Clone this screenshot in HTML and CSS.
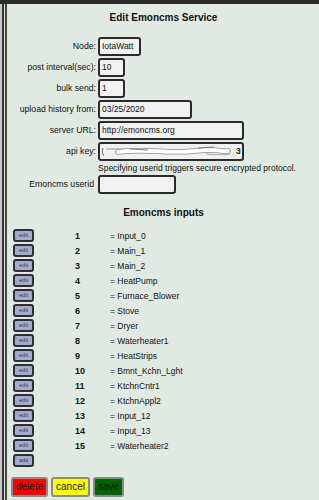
FILE: index.html
```html
<!DOCTYPE html>
<html>
<head>
<meta charset="utf-8">
<link rel="stylesheet" href="styles.css">
</head>
<body>
<div class="topbar"></div>
<div class="frame">
  <div class="panel">
    <h1 class="title">Edit Emoncms Service</h1>
    <div class="form">
      <label class="lbl">Node:</label>
      <div class="field"><span class="inp w-node">IotaWatt</span></div>
      <label class="lbl">post interval(sec):</label>
      <div class="field"><span class="inp w-small">10</span></div>
      <label class="lbl">bulk send:</label>
      <div class="field"><span class="inp w-small">1</span></div>
      <label class="lbl">upload history from:</label>
      <div class="field"><span class="inp w-date">03/25/2020</span></div>
      <label class="lbl">server URL:</label>
      <div class="field"><span class="inp w-url">http://emoncms.org</span></div>
      <label class="lbl">api key:</label>
      <div class="field"><span class="inp w-url key">
        <svg class="scribble" width="136" height="13" viewBox="0 0 136 13">
          <path d="M3 3 C 2 6, 2 9, 4 11" stroke="#666" stroke-width="1" fill="none"/>
          <path d="M6 4 L 24 4" stroke="#888" stroke-width="0.8" fill="none"/>
          <path d="M18 7 C 45 3, 70 9, 95 6 S 118 7, 128 6" stroke="#8a8a8a" stroke-width="5.5" fill="none" stroke-linecap="round"/>
          <path d="M18 7 C 45 3, 70 9, 95 6 S 118 7, 128 6" stroke="#ffffff" stroke-width="4" fill="none" stroke-linecap="round"/>
          <path d="M30 4 L 48 5 M 98 3 L 114 2" stroke="#666" stroke-width="0.8" fill="none"/>
          <path d="M106 9 C 114 10, 122 10, 130 9" stroke="#999" stroke-width="0.8" fill="none"/>
        </svg><span class="keyend">3</span></span></div>
      <span></span>
      <div class="note">Specifying userid triggers secure encrypted protocol.</div>
      <label class="lbl lbl-nc">Emoncms userid</label>
      <div class="field"><span class="inp w-user"></span></div>
    </div>

    <h2 class="title sub">Emoncms inputs</h2>
    <div class="inputs">
      <button class="edit">edit</button><span class="num">1</span><span class="name">= Input_0</span>
      <button class="edit">edit</button><span class="num">2</span><span class="name">= Main_1</span>
      <button class="edit">edit</button><span class="num">3</span><span class="name">= Main_2</span>
      <button class="edit">edit</button><span class="num">4</span><span class="name">= HeatPump</span>
      <button class="edit">edit</button><span class="num">5</span><span class="name">= Furnace_Blower</span>
      <button class="edit">edit</button><span class="num">6</span><span class="name">= Stove</span>
      <button class="edit">edit</button><span class="num">7</span><span class="name">= Dryer</span>
      <button class="edit">edit</button><span class="num">8</span><span class="name">= Waterheater1</span>
      <button class="edit">edit</button><span class="num">9</span><span class="name">= HeatStrips</span>
      <button class="edit">edit</button><span class="num">10</span><span class="name">= Bmnt_Kchn_Lght</span>
      <button class="edit">edit</button><span class="num">11</span><span class="name">= KtchnCntr1</span>
      <button class="edit">edit</button><span class="num">12</span><span class="name">= KtchnAppl2</span>
      <button class="edit">edit</button><span class="num">13</span><span class="name">= Input_12</span>
      <button class="edit">edit</button><span class="num">14</span><span class="name">= Input_13</span>
      <button class="edit">edit</button><span class="num">15</span><span class="name">= Waterheater2</span>
      <button class="edit">add</button><span></span><span></span>
    </div>

    <div class="actions">
      <button class="act del">delete</button>
      <button class="act can">cancel</button>
      <button class="act sav">save</button>
    </div>
  </div>
</div>
</body>
</html>
```

FILE: styles.css
```css
html, body {
  margin: 0;
  padding: 0;
  height: 100%;
  overflow: hidden;
}
body {
  background: #e0eae2;
  font-family: "Liberation Sans", Arial, sans-serif;
  color: #111;
}
.topbar {
  height: 4px;
  background: #2a2a2a;
}
.frame {
  min-height: 496px;
  box-shadow:
    inset 2px 0 0 #c9c9c9,
    inset 4px 0 0 #333333,
    inset 5px 0 0 #dcdcdc,
    inset 7px 0 0 #3f5038;
  padding-left: 8px;
}
.panel {
  padding-top: 8px;
}
.title {
  margin: 0;
  font-size: 10px;
  line-height: 12px;
  font-weight: bold;
  text-align: center;
}
.form {
  display: grid;
  grid-template-columns: 88px auto;
  column-gap: 2px;
  row-gap: 2px;
  margin-top: 13px;
  align-items: center;
}
.lbl {
  font-size: 8.7px;
  text-align: right;
  line-height: 19px;
}
.lbl-nc {
  padding-right: 2px;
}
.field {
  display: flex;
}
.inp {
  box-sizing: border-box;
  height: 19px;
  border: 2px solid #2b2b2b;
  border-radius: 3px;
  background: #f1f1f1;
  font-size: 8.5px;
  line-height: 15px;
  padding-left: 2px;
  display: flex;
  align-items: center;
  overflow: hidden;
  white-space: nowrap;
}
.w-node { width: 43px; }
.w-small { width: 27px; }
.w-date { width: 94px; }
.w-url { width: 146px; }
.w-user { width: 78px; }
.key {
  padding-left: 0;
}
.scribble {
  flex: none;
  display: block;
}
.keyend {
  font-size: 8.5px;
  font-weight: bold;
  color: #222;
}
.note {
  font-size: 8.5px;
  line-height: 10px;
  white-space: nowrap;
}
.sub {
  margin-top: 13px;
}
.inputs {
  display: grid;
  grid-template-columns: 21px 76px auto;
  grid-auto-rows: 13px;
  row-gap: 2px;
  margin-top: 10px;
  padding-left: 5px;
  align-items: center;
}
.edit {
  box-sizing: border-box;
  width: 21px;
  height: 13px;
  padding: 0;
  margin: 0;
  border: 2px solid #2e2e35;
  border-radius: 3px;
  background: #a3aacb;
  color: #3a3a4a;
  font-family: "Liberation Sans", Arial, sans-serif;
  font-size: 5.5px;
  line-height: 9px;
}
.num {
  font-size: 9px;
  font-weight: bold;
  padding-left: 41px;
}
.name {
  font-size: 8.5px;
}
.actions {
  display: flex;
  gap: 3px;
  margin-top: 10px;
  padding-left: 3px;
}
.act {
  box-sizing: border-box;
  height: 20px;
  padding: 0 3px;
  margin: 0;
  border: 2px solid #8a8a8a;
  border-radius: 3px;
  font-family: "Liberation Sans", Arial, sans-serif;
  font-size: 10px;
  line-height: 16px;
  color: #111;
}
.del { background: #ff0000; width: 37px; }
.can { background: #ffff00; width: 39px; }
.sav { background: #006400; width: 31px; }
```
